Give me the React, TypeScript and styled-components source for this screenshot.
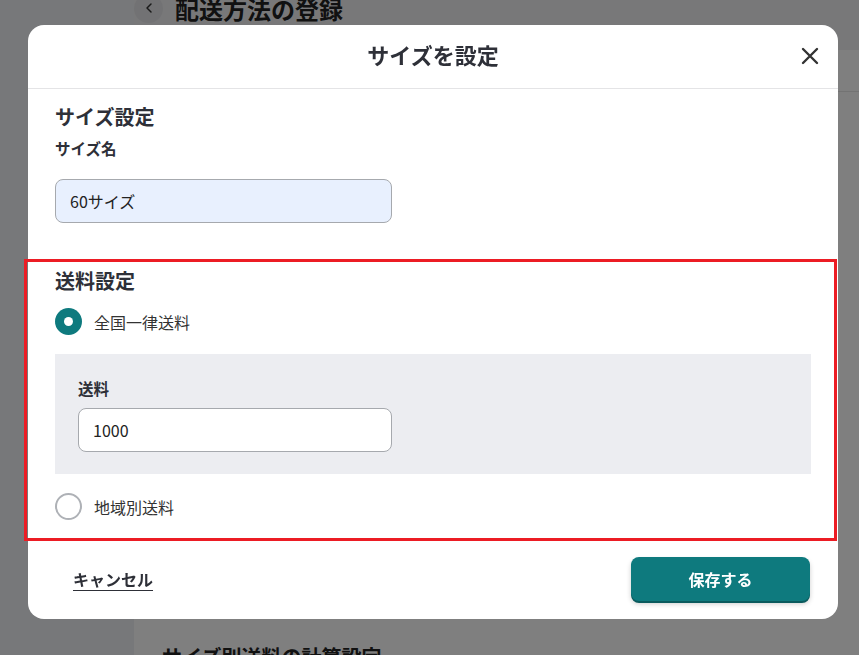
import React from 'react';
import styled, { createGlobalStyle } from 'styled-components';
import { ChevronLeft } from 'lucide-react';

const GlobalStyle = createGlobalStyle`
  html, body {
    margin: 0;
    padding: 0;
    width: 859px;
    height: 655px;
    overflow: hidden;
    font-family: "Noto Sans CJK JP", "Noto Sans", sans-serif;
    color: #333;
  }
  * { box-sizing: border-box; }
`;

// Page behind the dialog
const Page = styled.div`
  display: grid;
  grid-template-columns: 134px 1fr;
  height: 655px;
  background: #fff;
`;

const Sidebar = styled.aside`
  background: #eef0f4;
`;

const Main = styled.main`
  display: flex;
  flex-direction: column;
  margin-top: -14px;
`;

const PageHeader = styled.header`
  display: flex;
  align-items: center;
  gap: 12px;
  height: 64px;
  padding-bottom: 20px;
  background: #f0f0f2;
`;

const BackButton = styled.div`
  width: 29px;
  height: 29px;
  border-radius: 50%;
  background: #e4e5e8;
  display: flex;
  align-items: center;
  justify-content: center;
  color: #333;
`;

const PageTitle = styled.h1`
  margin: 0;
  font-size: 24px;
  font-weight: 700;
  color: #222;
`;

const PageCard = styled.div`
  margin-top: 41px;
  border-top: 1px solid #e6e6e6;
  flex: 1;
  padding: 550px 0 0 28px;
`;

const PageSubtitle = styled.h2`
  margin: 0;
  font-size: 20px;
  font-weight: 700;
  color: #222;
`;

// Dialog
const Backdrop = styled.div`
  position: fixed;
  inset: 0;
  background: rgba(0, 0, 0, 0.5);
`;

const Dialog = styled.div`
  position: fixed;
  left: 28px;
  top: 25px;
  width: 810px;
  height: 594px;
  background: #fff;
  border-radius: 16px;
  display: flex;
  flex-direction: column;
`;

const DialogHeader = styled.div`
  position: relative;
  height: 64px;
  border-bottom: 1px solid #e4e4e6;
  display: flex;
  align-items: center;
  justify-content: center;
`;

const DialogTitle = styled.h2`
  margin: 0 0 6px;
  font-size: 22px;
  font-weight: 700;
  color: #2e3038;
  line-height: 1;
`;

const CloseButton = styled.button`
  position: absolute;
  right: 16px;
  top: 19px;
  width: 24px;
  height: 24px;
  border: none;
  background: none;
  padding: 0;
  display: flex;
  align-items: center;
  justify-content: center;
  cursor: pointer;
`;

const Body = styled.div`
  padding: 15px 27px 0;
  display: flex;
  flex-direction: column;
`;

const SectionTitle = styled.h3`
  margin: 0;
  font-size: 20px;
  line-height: 26px;
  font-weight: 700;
  color: #2e3038;
`;

const FieldLabel = styled.div<{ $gap?: number }>`
  margin-top: ${p => p.$gap ?? 8}px;
  font-size: 15.5px;
  line-height: 20px;
  font-weight: 700;
  color: #2e3038;
`;

const TextInput = styled.input<{ $filled?: boolean; $gap?: number }>`
  display: block;
  margin-top: ${p => p.$gap ?? 21}px;
  width: ${p => (p.$filled ? 337 : 314)}px;
  height: 44px;
  padding: 0 14px;
  border: 1px solid #a6a9ae;
  border-radius: 8px;
  background: ${p => (p.$filled ? '#e8f0fe' : '#fff')};
  font-family: inherit;
  font-size: 16px;
  color: #222;
  outline: none;
`;

const ShippingSection = styled.section`
  position: relative;
  margin-top: 45px;
  display: flex;
  flex-direction: column;

  &::after {
    content: '';
    position: absolute;
    left: -31px;
    right: -26px;
    top: -9px;
    bottom: -21px;
    border: 3px solid #ec1c24;
    pointer-events: none;
  }
`;

const RadioRow = styled.label<{ $gap: number }>`
  display: flex;
  align-items: center;
  gap: 12px;
  margin-top: ${p => p.$gap}px;
  font-size: 16px;
  color: #333;
`;

const RadioMark = styled.span<{ $checked?: boolean }>`
  width: 27px;
  height: 27px;
  border-radius: 50%;
  flex-shrink: 0;
  display: flex;
  align-items: center;
  justify-content: center;
  background: ${p => (p.$checked ? '#0e7a7e' : '#fff')};
  border: ${p => (p.$checked ? 'none' : '2px solid #aeb1b6')};

  &::after {
    content: '';
    display: ${p => (p.$checked ? 'block' : 'none')};
    width: 9px;
    height: 9px;
    border-radius: 50%;
    background: #fff;
  }
`;

const FeePanel = styled.div`
  margin-top: 19px;
  background: #ecedf1;
  padding: 24px 23px 22px;
`;

const Footer = styled.div`
  margin-top: auto;
  padding: 0 28px 18px 27px;
  display: flex;
  align-items: center;
  justify-content: space-between;
`;

const CancelButton = styled.button`
  border: none;
  background: none;
  padding: 0 18px;
  font-family: inherit;
  font-size: 16px;
  font-weight: 700;
  color: #2e3038;
  text-decoration: underline;
  text-underline-offset: 4px;
  cursor: pointer;
`;

const SaveButton = styled.button`
  width: 179px;
  height: 44px;
  border: none;
  border-radius: 8px;
  background: #0e7a7e;
  box-shadow: 0 2px 0 #0a5a5d, 0 3px 5px rgba(0, 0, 0, 0.2);
  font-family: inherit;
  font-size: 16px;
  font-weight: 700;
  color: #fff;
  cursor: pointer;
`;

const CloseIcon = () => (
  <svg width="18" height="18" viewBox="0 0 18 18">
    <path d="M2 2 L16 16 M16 2 L2 16" stroke="#333" strokeWidth="2.4" strokeLinecap="round" />
  </svg>
);

export default function App() {
  return (
    <>
      <GlobalStyle />
      <Page>
        <Sidebar />
        <Main>
          <PageHeader>
            <BackButton>
              <ChevronLeft size={16} strokeWidth={2.2} />
            </BackButton>
            <PageTitle>配送方法の登録</PageTitle>
          </PageHeader>
          <PageCard>
            <PageSubtitle>サイズ別送料の計算設定</PageSubtitle>
          </PageCard>
        </Main>
      </Page>
      <Backdrop />
      <Dialog>
        <DialogHeader>
          <DialogTitle>サイズを設定</DialogTitle>
          <CloseButton aria-label="閉じる">
            <CloseIcon />
          </CloseButton>
        </DialogHeader>
        <Body>
          <SectionTitle>サイズ設定</SectionTitle>
          <FieldLabel>サイズ名</FieldLabel>
          <TextInput $filled defaultValue="60サイズ" />
          <ShippingSection>
            <SectionTitle>送料設定</SectionTitle>
            <RadioRow $gap={14}>
              <RadioMark $checked />
              全国一律送料
            </RadioRow>
            <FeePanel>
              <FieldLabel $gap={0}>送料</FieldLabel>
              <TextInput $gap={10} defaultValue="1000" />
            </FeePanel>
            <RadioRow $gap={19}>
              <RadioMark />
              地域別送料
            </RadioRow>
          </ShippingSection>
        </Body>
        <Footer>
          <CancelButton>キャンセル</CancelButton>
          <SaveButton>保存する</SaveButton>
        </Footer>
      </Dialog>
    </>
  );
}
